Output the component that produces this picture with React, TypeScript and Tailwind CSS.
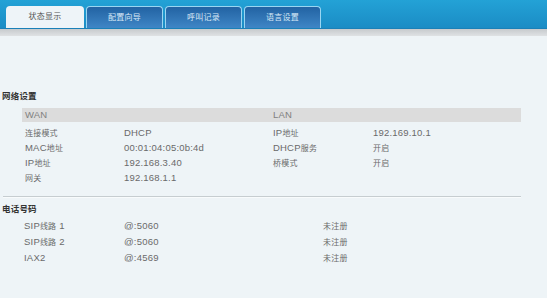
import React from "react";

const tabs = ["状态显示", "配置向导", "呼叫记录", "语言设置"];

const wanRows = [
  ["连接模式", "DHCP"],
  ["MAC地址", "00:01:04:05:0b:4d"],
  ["IP地址", "192.168.3.40"],
  ["网关", "192.168.1.1"],
];

const lanRows = [
  ["IP地址", "192.169.10.1"],
  ["DHCP服务", "开启"],
  ["桥模式", "开启"],
  ["", ""],
];

const lines = [
  ["SIP线路 1", "@:5060", "未注册"],
  ["SIP线路 2", "@:5060", "未注册"],
  ["IAX2", "@:4569", "未注册"],
];

// chinese glyphs in the shot are rendered smaller than the latin ones
function Txt({ s }: { s: string }) {
  const parts = s.match(/[\u4e00-\u9fff]+|[^\u4e00-\u9fff]+/g) || [];
  return (
    <>
      {parts.map((p, i) =>
        /[\u4e00-\u9fff]/.test(p) ? (
          <span key={i} className="text-[8px]">
            {p}
          </span>
        ) : (
          <span key={i}>{p}</span>
        )
      )}
    </>
  );
}

export default function App() {
  return (
    <div
      className="flex h-[298px] w-[547px] flex-col overflow-hidden bg-[#eef4f7] text-[9.5px] tracking-[0.2px] text-[#6a6a6a]"
      style={{ fontFamily: '"Liberation Sans", "Noto Sans CJK SC", sans-serif' }}
    >
      {/* Tab bar */}
      <div className="flex h-[29px] items-end gap-[2px] border-b border-[#1a80b8] bg-gradient-to-b from-[#23a2d6] to-[#1b8cc5] pl-[6px]">
        {tabs.map((t, i) =>
          i === 0 ? (
            <div
              key={t}
              className="flex h-[22px] w-[78px] items-center justify-center rounded-t-[4px] bg-[#eef4f8] text-[8px] text-[#555]"
            >
              {t}
            </div>
          ) : (
            <div
              key={t}
              className="flex h-[22px] w-[77px] items-center justify-center rounded-t-[4px] border border-b-0 border-[#9ad6f2] bg-gradient-to-b from-[#2263a3] to-[#3f86c6] text-[8px] text-[#d8e8f6]"
            >
              {t}
            </div>
          )
        )}
      </div>
      <div className="h-[7px] bg-gradient-to-b from-[#c6cacd] to-[#dfe2e4]" />

      {/* 网络设置 */}
      <div className="mt-[52px] flex h-[16px] items-center pl-[2px] text-[8.5px] font-bold text-[#333]">
        网络设置
      </div>
      <div className="ml-[22px] mt-[4px] w-[499px]">
        <div className="flex h-[14px] items-center bg-[#dcdcdc] text-[#808080]">
          <div className="w-[251px] pl-[3px]">WAN</div>
          <div>LAN</div>
        </div>
        <div className="mt-[4px]">
          {wanRows.map((r, i) => (
            <div key={i} className="flex h-[15px] items-center">
              <div className="w-[102px] pl-[3px]">
                <Txt s={r[0]} />
              </div>
              <div className="w-[149px]">
                <Txt s={r[1]} />
              </div>
              <div className="w-[100px]">
                <Txt s={lanRows[i][0]} />
              </div>
              <div>
                <Txt s={lanRows[i][1]} />
              </div>
            </div>
          ))}
        </div>
      </div>

      <div className="ml-[3px] mt-[10px] h-[2px] w-[518px] border-t border-[#c6cdd0] bg-[#f8fbfc]" />

      {/* 电话号码 */}
      <div className="mt-[3px] flex h-[16px] items-center pl-[2px] text-[8.5px] font-bold text-[#333]">
        电话号码
      </div>
      <div className="ml-[22px] mt-[1px]">
        {lines.map((r, i) => (
          <div key={i} className="flex h-[16px] items-center">
            <div className="w-[102px] pl-[2px]">
              <Txt s={r[0]} />
            </div>
            <div className="w-[199px]">{r[1]}</div>
            <div>
              <Txt s={r[2]} />
            </div>
          </div>
        ))}
      </div>
    </div>
  );
}
